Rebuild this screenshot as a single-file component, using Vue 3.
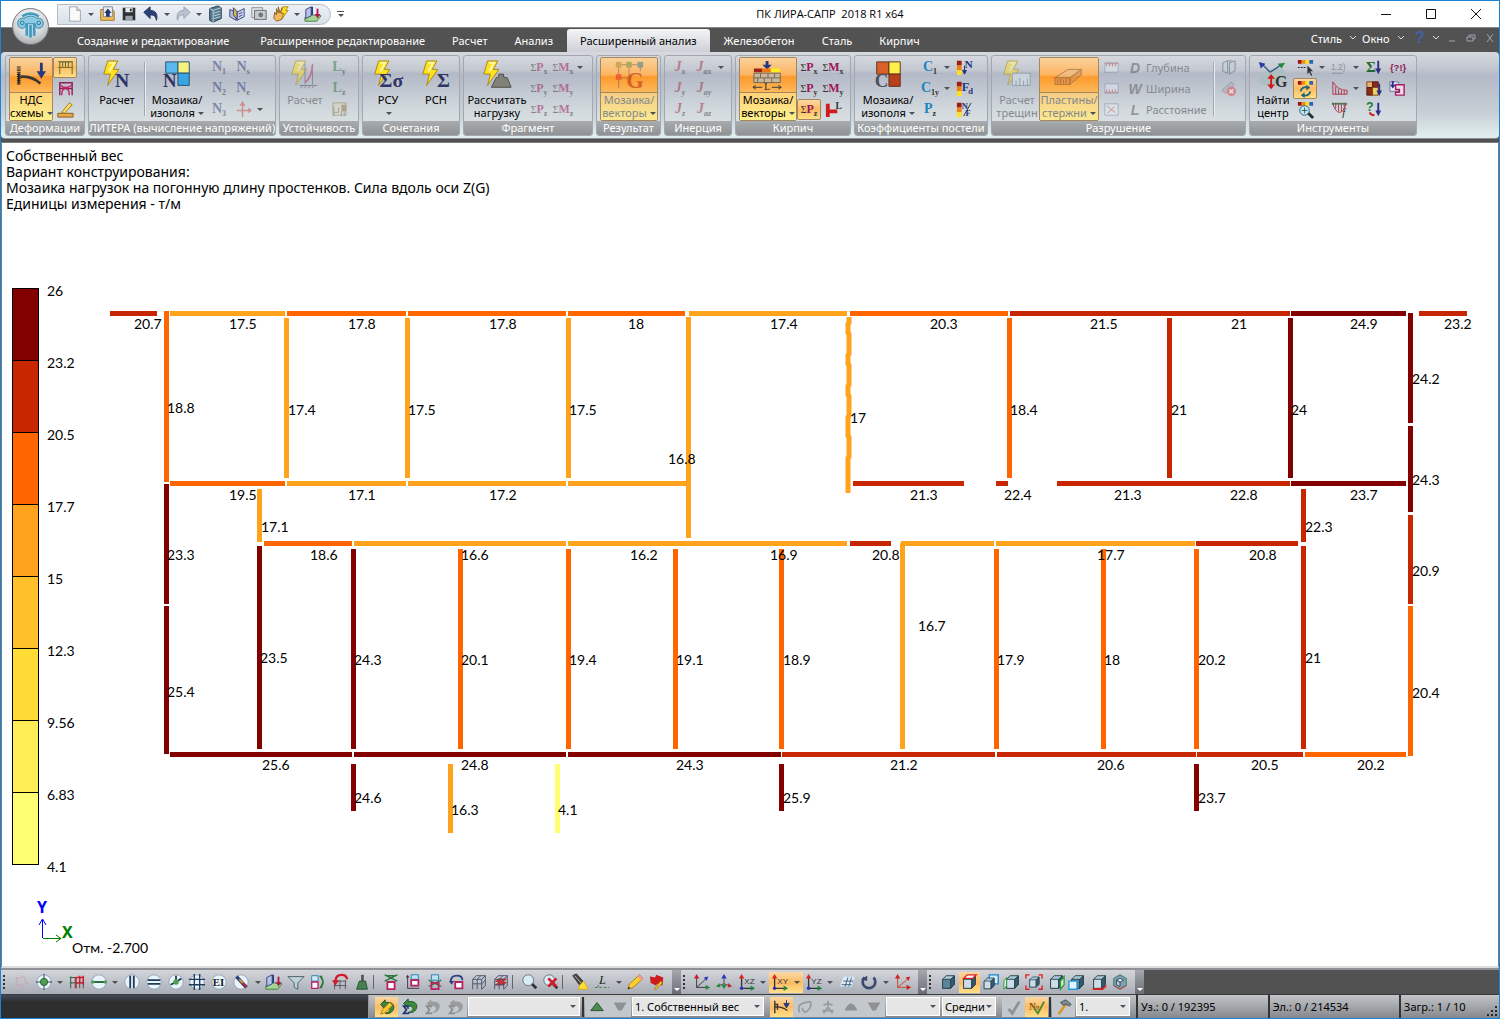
<script setup>
import { ref } from 'vue'

const bolt = '<path d="M7 1h11l-5 9h6L7 27l3-12H3z" fill="#ffe11f" stroke="#a8841a"/><path d="M9 3h5l-5 9" fill="none" stroke="#fff9b0" stroke-width="2"/>'
const cube = (front = '#5c8499') => `<path d="M4 7l4-4h9v10l-4 4H4z" fill="#a9c6d3" stroke="#25424f"/><path d="M4 7h9v10H4z" fill="${front}" stroke="#25424f"/><path d="M13 7l4-4v10l-4 4z" fill="#37596a" stroke="#25424f"/>`
const disc = '<circle cx="10" cy="10" r="8" fill="#e9f3fa" stroke="#8fa3b8"/>'
const axes = (t) => `<path d="M4 17V4M4 17h11" stroke="#333" stroke-width="1.5"/><path d="M4 1l-3 5h6z" fill="#d22"/><path d="M19 17l-5-3v6z" fill="#1a8a3a"/><circle cx="4" cy="17" r="2" fill="#2a36b8"/><text x="7" y="12" font-size="9" font-family="Liberation Sans, sans-serif" fill="#333">${t}</text>`
const rainbow = '<path d="M2 2h4v4H2z" fill="#a01212"/><path d="M6 2h4v4H6z" fill="#f08a10"/><path d="M10 2h4v4h-4z" fill="#ffe020"/><path d="M14 2h4v4h-4z" fill="#2a62c0"/>'
const bars = '<path d="M2 3h5v5H2z" fill="#9c1c10"/><path d="M2 8h5v5H2z" fill="#f08010"/><path d="M2 13h5v5H2z" fill="#ffe020"/>'
const serif = 'font-family="Liberation Serif, serif" font-weight="bold"'

const icons = {
  page: '<path d="M4 2h8l4 4v12H4z" fill="#fafafa" stroke="#9aa2ac"/><path d="M12 2v4h4" fill="#ddd" stroke="#9aa2ac"/>',
  open: '<path d="M3 5h13l2 2v10H3z" fill="#f0bd55" stroke="#9c7422"/><path d="M6 2h10v11H6z" fill="#e8edf5" stroke="#76849c"/><path d="M11 4l4 5h-2v4H9V9H7z" fill="#26336f"/>',
  save: '<path d="M3 3h14v14H3z" fill="#2e3236"/><path d="M6 3h8v5H6z" fill="#e7eaec"/><path d="M6 12h8v5H6z" fill="#9ca3a8"/><path d="M11 4h2v3h-2z" fill="#2e3236"/>',
  undo: '<path d="M2 8l7-6v4c6 0 9 4 7 11-1-5-3-6-7-6v4z" fill="#2b4378" stroke="#1f2e55"/>',
  redo: '<path d="M18 8l-7-6v4C5 6 2 10 4 17c1-5 3-6 7-6v4z" fill="#b9c3cf" stroke="#94a2b1"/>',
  book: '<path d="M4 4l9-3 4 2v12l-9 4-4-2z" fill="#55788c" stroke="#243c4a"/><path d="M8 6v13M4 4l4 2 9-3M9 9l7-2M9 12l7-2M9 15l7-2" stroke="#c5dbe6" fill="none"/>',
  openbook: '<path d="M2 5l7 3v9l-7-4z" fill="#b6c0e0" stroke="#2e3d78"/><path d="M18 4l-8 4v9l8-4z" fill="#cdd5ee" stroke="#2e3d78"/><path d="M6 3l4 4v9l-4-5z" fill="#dcb54a" stroke="#2e3d78"/><path d="M12 10l4-2M12 13l4-2" stroke="#333a9a"/>',
  camera: '<path d="M2 3h12v11H2z" fill="#e4e6e8" stroke="#888"/><path d="M5 6h13v10H5z" fill="#c2c7cb" stroke="#666"/><circle cx="12" cy="11" r="3.500" fill="#72797f" stroke="#eee"/>',
  hand: '<path d="M3 8l2 3V4l2 5V2l2 7 2-6v7l4-2-4 8-6 2-3-3z" fill="#f3b85e" stroke="#8f5a1e"/><path d="M12 2h6l-3 4h3l-7 9 2-6h-3z" fill="#ffe11f" stroke="#a8841a"/>',
  load3d: '<path d="M1 14l8-3 10 1-5 6H1z" fill="#a6d492" stroke="#3d7a34"/><path d="M2 5l6-3v10l-6 3z" fill="#b7c2e4" stroke="#2d3a80"/><path d="M9 2v9" stroke="#2d3a80" stroke-width="2"/><path d="M15 4v7" stroke="#b3164e" stroke-width="2"/><path d="M12 10h6l-3 5z" fill="#b3164e"/>',
  beam: '<path d="M4 7v20" stroke="#222" stroke-width="4" stroke-dasharray="1 1"/><path d="M4 14v11" stroke="#222" stroke-width="2"/><path d="M5 18q12-2 22 7" fill="none" stroke="#3b3735" stroke-width="3"/><path d="M28 3v10" stroke="#243a80" stroke-width="3"/><path d="M23 12h10l-5 8z" fill="#243a80"/>',
  calcN: `${bolt}<text x="15" y="29" ${serif} font-size="21" fill="#2e3566">N</text>`,
  mosaicN: `<path d="M5 2h13v12H5z" fill="#59b9ee" stroke="#24506c"/><path d="M18 2h12v12H18z" fill="#f5f27e" stroke="#24506c"/><path d="M18 14h12v13H18z" fill="#3aa4e2" stroke="#24506c"/><text x="2" y="29" ${serif} font-size="20" fill="#2e3566">N</text>`,
  buckling: `${bolt}<path d="M17 4v22M25 4v22" stroke="#555" stroke-width="1"/><path d="M25 5q-1 14-8 19" stroke="#c0306a" stroke-width="2" fill="none"/><path d="M11 27h19M12 30l3-3m1 3l3-3m1 3l3-3m1 3l3-3" stroke="#444"/>`,
  sigma: `${bolt}<text x="8" y="29" ${serif} font-size="21" fill="#2e3566">Σσ</text>`,
  sum: `${bolt}<text x="18" y="29" ${serif} font-size="21" fill="#2e3566">Σ</text>`,
  weight: `${bolt}<path d="M16 19l3-1v-3h5v3l4 1 4 10H11z" fill="#82827a" stroke="#4c4c46"/>`,
  resultG: `<path d="M3 5h27M6 5v25M17 5v22M29 5v7M3 19h15" stroke="#555" stroke-width="1"/><path d="M3 2h6v6H3z" fill="#9c8a20"/><path d="M14 2h6v6h-6z" fill="#6a8a30"/><path d="M26 2h6v6h-6z" fill="#2b7a86"/><path d="M3 15h6v6H3z" fill="#d22"/><text x="14" y="30" ${serif} font-size="24" fill="#b01a10">G</text>`,
  bricks: `<path d="M16 1v6" stroke="#243a80" stroke-width="3"/><path d="M11 5h10l-5 5z" fill="#243a80"/><path d="M2 9h9v4H2z" fill="#a02018"/><path d="M11 9h9v4h-9z" fill="#f07810"/><path d="M20 9h10v4H20z" fill="#ffee20"/><path d="M2 14h28v10H2z" fill="#cdb69c" stroke="#665"/><path d="M2 19h28M9 14v5M17 14v5M24 14v5M6 19v5M13 19v5M21 19v5" stroke="#665"/><path d="M1 29h10M21 29h10M4 27l-3 2 3 2M28 27l3 2-3 2" fill="none" stroke="#333"/><text x="13" y="32" font-family="Liberation Serif, serif" font-size="10" fill="#222">L</text>`,
  mosaicC: `<path d="M5 2h13v13H5z" fill="#d9602a" stroke="#5a3018"/><path d="M18 2h12v13H18z" fill="#fff04a" stroke="#5a3018"/><path d="M18 15h12v13H18z" fill="#b9401c" stroke="#5a3018"/><text x="3" y="29" ${serif} font-size="20" fill="#4b5158">C</text>`,
  crack: `${bolt}<path d="M12 14h19v13H12z" fill="#dfe8ee" stroke="#6d7f8c"/><path d="M16 27v-5m4 5v-8m4 8v-5m4 5v-7" stroke="#5d7690"/>`,
  slab: '<path d="M2 19l14-9h14l-12 9z" fill="#e6c098" stroke="#6a4a30"/><path d="M2 19h16v7H2zM18 19l12-9v6l-12 10z" fill="#c98a58" stroke="#6a4a30"/><path d="M5 25v-4m3 4v-5m3 5v-4m3 4v-5" stroke="#8a2a2a"/>',
  center: `<ellipse cx="16" cy="18" rx="15" ry="8" fill="#aebfc0" transform="rotate(-20 16 18)"/><path d="M14 13L5 4M14 13L26 5" stroke="#3a5a80" stroke-width="1.500"/><path d="M2 2l7 2-5 5z" fill="#2c3aa8"/><path d="M30 3l-8 1 4 5z" fill="#1f8a3c"/><path d="M15 18v9" stroke="#d01818" stroke-width="2"/><path d="M15 15l4 5h-8zM15 31l4-5h-8z" fill="#d01818"/><text x="19" y="29" ${serif} font-size="17" fill="#333">G</text>`,
  frame: '<path d="M4 17V4h13v13M3 10h15M7 4v6M13 4v6M10 4v6" fill="none" stroke="#4a6b2e"/><path d="M2 4h16M2 10h16" stroke="#8a7020"/>',
  framePink: '<path d="M4 17V4h13v13M4 10h13" fill="none" stroke="#8a2456" stroke-width="1.500"/><path d="M4 6q6 6 13 0M6 17q0-7 4-7t4 7" fill="none" stroke="#c8246a" stroke-width="1.500"/>',
  ruler: '<path d="M2 14h16v4H2z" fill="#e6a84a" stroke="#8d5f1b"/><path d="M6 13L14 3l3 2-8 9z" fill="#ffe066" stroke="#9d7a1c"/>',
  cross: '<path d="M9 3v15M3 11h14" stroke="#c44" stroke-width="1.500"/><path d="M9 1l3 5H6zM19 11l-4-3v6z" fill="#c44"/>',
  mu: '<path d="M3 3h14v13H3z" fill="#d8d2b6" stroke="#8b7c50"/><path d="M12 5h5v7h-5z" fill="#8d6e3a"/><path d="M4 7v10M4 13h5V8M12 12v5M15 12v5" stroke="#666" fill="none"/>',
  redL: `<path d="M4 4v14M4 12h10" stroke="#d01c1c" stroke-width="4"/><text x="12" y="9" ${serif} font-size="10" fill="#333">L</text>`,
  barN: `${bars}<path d="M10 8v7M8 13l2 4 2-4z" fill="#26357c" stroke="#26357c"/><text x="10" y="10" ${serif} font-size="12" fill="#26357c">N</text>`,
  barF: `${bars}<text x="7" y="13" ${serif} font-size="13" fill="#26357c">F</text><text x="14" y="16" ${serif} font-size="9" fill="#26357c">d</text>`,
  barNF: `${bars}<path d="M17 3L9 17" stroke="#333"/><text x="7" y="9" ${serif} font-size="9" fill="#26357c">N</text><text x="11" y="17" ${serif} font-size="9" fill="#26357c">F</text>`,
  gaugeTop: '<path d="M3 5h14v10H3z" fill="#e4e9ef" stroke="#7a8ba6"/><path d="M3 6h14M5 6v3m3-3v3m3-3v3m3-3v3" stroke="#b44"/>',
  gaugeBot: '<path d="M3 5h14v10H3z" fill="#e4e9ef" stroke="#7a8ba6"/><path d="M3 14h14M5 14v-3m3 3v-3m3 3v-3m3 3v-3" stroke="#b44"/>',
  gaugeX: '<path d="M3 4h14v12H3z" fill="#e4e9ef" stroke="#7a8ba6"/><path d="M5 6q5 5 9 7M13 7l-7 7" stroke="#b44" fill="none"/>',
  dups: '<path d="M4 5l5-2v13l-5-2zM11 5l6-2v10l-6 4z" fill="#c5ced8" stroke="#3f5870"/><path d="M9 3h5" stroke="#3f5870"/>',
  noErase: '<path d="M3 12L13 3l3 3-9 9z" fill="#aab" stroke="#777"/><circle cx="13" cy="13" r="5" fill="#e04848"/><path d="M11 11l4 4m0-4l-4 4" stroke="#fff" stroke-width="1.500"/>',
  palCursor: `${rainbow}<path d="M2 10h9" stroke="#222" stroke-dasharray="2 1"/><path d="M12 8v9l2-2 2 4 1-1-2-4h3z" fill="#333"/>`,
  palLoop: `${rainbow}<path d="M5 13a5 5 0 0 1 7-4M15 13a5 5 0 0 1-7 4" fill="none" stroke="#1f6670" stroke-width="2"/><path d="M11 6l4 3-4 3zM9 14l-4 3 4 3z" fill="#1f6670"/>`,
  palZoom: `${rainbow}<circle cx="9" cy="11" r="5" fill="#c8e4ee" stroke="#23627a"/><path d="M6 11h6M9 8v6" stroke="#23627a"/><path d="M13 14l5 5" stroke="#233" stroke-width="3"/>`,
  digits: '<text x="1" y="13" font-size="9" font-family="Liberation Sans, sans-serif" fill="#8a9098">1.2)</text><path d="M2 16h12" stroke="#8a9098"/>',
  curve: '<path d="M3 3v13h15v-4Q8 12 3 3M6 8v8m3-5v5m3-4v4m3-4v4" fill="none" stroke="#b0304e"/>',
  arch: '<path d="M3 4h14q-3 9-7 9T3 4M6 5v4m3-4v7m3-7v7m3-7v4" fill="none" stroke="#b0304e"/><path d="M2 4h16" stroke="#2c7a3c" stroke-width="2" stroke-dasharray="2 1"/><text x="13" y="17" font-family="Liberation Serif, serif" font-size="11" font-style="italic" fill="#222">f</text>',
  sumDown: `<text x="2" y="15" ${serif} font-size="16" fill="#1f6b2c">Σ</text><path d="M15 3v9" stroke="#2a2f86" stroke-width="2"/><path d="M12 11h6l-3 6z" fill="#2a2f86"/>`,
  blocks: '<path d="M3 3h6v6H3z" fill="#e8b070" stroke="#7a4a20"/><path d="M9 3h6v6H9zM3 9h6v8H3z" fill="#8a2a18" stroke="#5a1a10"/><path d="M9 9h6v8H9z" fill="#f0d060" stroke="#7a4a20"/><path d="M16 5v8" stroke="#2a2f86" stroke-width="2"/><path d="M13 12h6l-3 6z" fill="#2a2f86"/>',
  askDown: '<text x="2" y="12" font-family="Liberation Sans, sans-serif" font-weight="bold" font-size="13" fill="#1f7a34">?</text><path d="M6 13q1 3 5 3" fill="none" stroke="#c22" stroke-width="2"/><path d="M15 3v9" stroke="#2a2f86" stroke-width="2"/><path d="M12 11h6l-3 6z" fill="#2a2f86"/>',
  ask: '<text x="2" y="14" font-family="Liberation Sans, sans-serif" font-weight="bold" font-size="10" fill="#8c1d58">{?!}</text>',
  copy: '<path d="M2 3h9v10H2z" fill="#e6e9f3" stroke="#6a76a4"/><path d="M8 8V6h9v11H8v-3h4v-3H8z" fill="#f4dbe8" stroke="#a02060" stroke-width="1.500"/><path d="M5 2v5" stroke="#2a2f86" stroke-width="2"/><path d="M2 6h6l-3 4z" fill="#2a2f86"/>',
  star: '<path d="M3 5l5 1 4-3 1 5 4 3-5 1-2 5-3-4-4 1 2-4z" fill="none" stroke="#c9a3aa"/>',
  node: `${disc}<path d="M10 1v18M1 10h18" stroke="#235" /><circle cx="10" cy="10" r="4" fill="#4ca052" stroke="#1e5a26"/>`,
  gridRed: '<path d="M3 5h15M3 11h15M3 5v12M8 5v12M13 5v12M17 5v12" stroke="#444" fill="none"/><path d="M9 5h8M9 11h8M9 5v12M13 3v8M17 3v10" fill="none" stroke="#d01c2c" stroke-width="1.500"/><path d="M2 4h2v2H2zM2 10h2v2H2z" fill="#2c8a3c"/>',
  barH: `${disc}<path d="M3 10h14" stroke="#1f5a2c" stroke-width="2"/><circle cx="3" cy="10" r="2" fill="#4ca052"/><circle cx="17" cy="10" r="2" fill="#4ca052"/>`,
  barV: `${disc}<path d="M8 3v14M12 3v14" stroke="#1f3b5c" stroke-width="2"/>`,
  barEq: `${disc}<path d="M3 8h14M3 12h14" stroke="#1f3b5c" stroke-width="2"/>`,
  tri: `${disc}<path d="M10 10V3M10 10l-6 3M10 10l6-4" stroke="#235" stroke-width="2"/><circle cx="10" cy="10" r="3" fill="#4ca052"/>`,
  hash: `${disc}<path d="M7 1v18M13 1v18M1 7h18M1 13h18" stroke="#1f3b5c" stroke-width="1.500"/>`,
  ei: `${disc}<text x="3" y="14" ${serif} font-size="12" fill="#222">EI</text>`,
  noPen: `${disc}<path d="M5 4l11 12" stroke="#2a3f7c" stroke-width="4"/><path d="M8 7l5 5" stroke="#e0a030" stroke-width="2"/><path d="M12 11l4 5" stroke="#c22" stroke-width="2"/>`,
  funnel: '<path d="M1 4h18l-7 7v7l-4-2v-5z" fill="#c3d2d8" stroke="#3e5b62"/>',
  swap: '<path d="M3 3h7v6H3z" fill="#d4ebf8" stroke="#247ab0"/><path d="M3 10h7v7H3z" fill="#fff" stroke="#c02068" stroke-width="1.500"/><path d="M13 4q5 6 0 12" stroke="#2f7a3a" stroke-width="2" fill="none"/><path d="M11 3l4 0-1 4zM11 17l4 0-1-4z" fill="#2f7a3a"/>',
  frameUndo: '<path d="M3 9h14M3 14h14M4 8v10M10 8v10M16 8v10" stroke="#555"/><path d="M5 9q0-7 7-7 5 0 6 5" fill="none" stroke="#d01c2c" stroke-width="2.500"/><path d="M1 8h8l-4 6z" fill="#d01c2c"/>',
  brush: '<path d="M9 2h3v7H9z" fill="#555"/><path d="M7 9h7l2 9H4z" fill="#468052" stroke="#23502c"/>',
  cutTop: '<path d="M3 2l14 7M17 2L3 9M5 3h10" stroke="#267a38" stroke-width="1.500"/><path d="M6 10h8v8H6z" fill="#fff" stroke="#b82060" stroke-width="2"/>',
  cutSide: '<path d="M4 4v13h13" fill="none" stroke="#333"/><path d="M8 2h8v5H8z" fill="#bfe1f4" stroke="#247ab0"/><path d="M8 8h8v6H8z" fill="#fff" stroke="#b82060" stroke-width="2"/><path d="M2 5l2-3 2 3z" fill="#333"/>',
  cutMid: '<path d="M6 2h8v6H6z" fill="#bfe1f4" stroke="#247ab0"/><path d="M3 8l14 7M17 8L3 15" stroke="#267a38" stroke-width="1.500"/><path d="M6 11h8v7H6z" fill="none" stroke="#b82060" stroke-width="2"/>',
  rotateBox: '<path d="M3 10q0-7 7-7 6 0 6 5" fill="none" stroke="#2f3f80" stroke-width="2"/><path d="M1 9h6l-3 4z" fill="#2f3f80"/><path d="M8 10h8v7H8z" fill="#fff" stroke="#b82060" stroke-width="2"/>',
  frame3d: '<path d="M3 7h10v11M3 7v11M8 7v11M3 12h10M3 7l4-4h10v11l-4 4M13 7l4-4M8 7l4-4M13 12l4-4" fill="none" stroke="#444e6c"/>',
  frame3dRed: '<path d="M3 10h10l4-4H7zM3 14h10l4-4H7z" fill="#d83030"/><path d="M3 7h10v11M3 7v11M8 7v11M3 13h10M3 7l4-4h10v11l-4 4M13 7l4-4M8 7l4-4" fill="none" stroke="#444e6c"/>',
  zoom: '<path d="M12 12l5 5" stroke="#333" stroke-width="3"/><circle cx="8" cy="8" r="6" fill="#d9edf6" stroke="#5b6e7a"/>',
  zoomX: '<path d="M12 12l5 5" stroke="#333" stroke-width="3"/><circle cx="8" cy="8" r="6" fill="#d9edf6" stroke="#5b6e7a"/><path d="M7 6l9 9M16 6l-9 9" stroke="#d01c2c" stroke-width="3"/>',
  torch: '<path d="M2 3l4-2 8 9-4 4z" fill="#4d4a44" stroke="#222"/><path d="M4 3l7 8" stroke="#b8b4a8"/><path d="M14 9l5 9h-11l2-5z" fill="#ffe030" stroke="#d8a818"/>',
  localAxis: '<path d="M2 16h16M5 16l5-9" stroke="#3a7a44" stroke-dasharray="3 2"/><text x="7" y="12" font-family="Liberation Serif, serif" font-style="italic" font-size="13" fill="#222">L</text>',
  pencil: '<path d="M2 18l2-6L15 2l4 4-11 10z" fill="#ffcf2e" stroke="#a87818"/><path d="M15 2l4 4-2 2-4-4z" fill="#ef9aa0"/><path d="M2 18l1-3 2 2z" fill="#333"/>',
  flag: '<path d="M2 4l6 1 1-3 8 3-1 9-6-2-1 2-6-3z" fill="#cf1c1c"/><path d="M7 18l7-9 2 2-7 7z" fill="#ffcf2e" stroke="#a87818"/>',
  axis3: '<path d="M4 4v12h12M4 16L15 6" stroke="#333" fill="none"/><path d="M4 1l3 5H1z" fill="#d01c2c"/><path d="M19 16l-5-3v6z" fill="#268a3c"/><path d="M17 4l-5 1 3 4z" fill="#2a36b8"/>',
  axisIso: '<path d="M10 3v9M10 12l-6 2M10 12l6 2" stroke="#444"/><path d="M10 1l3 5H7z" fill="#2a36b8"/><path d="M1 15l4-4 1 5z" fill="#268a3c"/><path d="M19 15l-4-4-1 5z" fill="#d01c2c"/><path d="M10 18l-3-5h6z" fill="#268a3c"/>',
  xz: axes('XZ'), xy: axes('XY'), yz: axes('YZ'),
  plane: '<path d="M2 15L6 4h13l-4 11z" fill="#e0ebf4" stroke="#c1d2e0"/><path d="M4 13h11M6 9h11M8 15l3-10M12 15l3-10" stroke="#38587a"/>',
  spin: '<path d="M5 5a7 7 0 1 0 10 0" fill="none" stroke="#3c4a70" stroke-width="3"/><path d="M1 7l7-4v6z" fill="#3c4a70"/>',
  axisRed: '<path d="M4 4v12h12M4 16L15 7" stroke="#c42" fill="none"/><path d="M4 1l3 5H1zM19 16l-5-3v6zM18 4l-5 1 3 4z" fill="#d02020"/>',
  cube: cube(), cubeTop: cube('#cddde6') + '<path d="M4 6l4-4h10l-4 4z" fill="#fff" stroke="#e02020" stroke-width="1.500"/>',
  cubeBack: '<path d="M8 2h10v10H8z" fill="#d5ecfa" stroke="#1f82c8" stroke-width="1.500"/>' + `<g transform="translate(-1 3) scale(.85)">${cube('#cddde6')}</g>`,
  cubeLeft: cube('#cddde6') + '<path d="M1 9l3-4v9l-3 4z" fill="#d8f4d8" stroke="#2a9a3c"/>',
  cubeFit: `<g transform="translate(2 2) scale(.8)">${cube('#cddde6')}</g><path d="M1 6V2h4M15 2h4v4M19 14v4h-4M5 18H1v-4" fill="none" stroke="#e02020" stroke-width="1.500"/>`,
  cubeRight: cube('#cddde6') + '<path d="M15 9l4-5v9l-4 5z" fill="#d8f4d8" stroke="#2a9a3c" stroke-width="1.500"/>',
  cubeFront: cube() + '<path d="M1 9h9v9H1z" fill="#e5f4fc" stroke="#1f9be0" stroke-width="1.500"/>',
  cubeBottom: cube('#cddde6') + '<path d="M3 18h11l4-4" fill="none" stroke="#e02020" stroke-width="2"/>',
  cubeIso: '<path d="M10 2l7 4v8l-7 4-7-4V6z" fill="#7fa1b2" stroke="#2a7a50"/><path d="M6 8l4-2 4 2-4 2z" fill="#eef6fa" stroke="#345"/><path d="M6 8v5l4 2v-5z" fill="#b5cdd8" stroke="#345"/><path d="M3 14l7 4 7-4" stroke="#c33" fill="none"/>',
  loopPen: '<path d="M3 7l5-5v3c8-1 11 3 9 8-2 4-6 5-9 4 4-1 6-3 5-5s-2-2-5-2v3z" fill="#3d8a3e" stroke="#1d4f22"/><path d="M3 18l2-5 8-8 3 3-8 8z" fill="#ffcf2e" stroke="#a87818"/>',
  loopSum: '<path d="M3 6l5-5v3c8-1 11 3 9 8-2 4-6 5-9 4 4-1 6-3 5-5s-2-2-5-2v3z" fill="#3d8a3e" stroke="#1d4f22"/><path d="M9 9H3l3 4-3 4h6" fill="none" stroke="#26357c" stroke-width="2"/>',
  loopGrey: '<path d="M3 6l5-5v3c8-1 11 3 9 8-2 4-6 5-9 4 4-1 6-3 5-5s-2-2-5-2v3z" fill="#9a9c9e"/><path d="M9 9H3l3 4-3 4h6" fill="none" stroke="#8b8d90" stroke-width="2"/>',
  up: '<path d="M10 5l7 9H3z" fill="#4b8a52" stroke="#2a4a30"/>',
  down: '<path d="M3 5h14l-5 9H8z" fill="#8f9193"/>',
  upGrey: '<path d="M3 14q3-8 7-8t7 8z" fill="#8f9193"/>',
  deform: '<path d="M2 3v14M2 10q8-1 14 4M2 7h3v6" stroke="#333" stroke-width="1.500" fill="none"/><path d="M15 2v5M12 6l3 5 3-5z" stroke="#26357c" fill="#26357c"/>',
  loop: '<path d="M4 16q-3-8 3-10t9-2q2 6-3 10T7 11" fill="none" stroke="#9a9c9e" stroke-width="2"/>',
  man: '<path d="M10 3v6M5 8l5-2 5 2M5 17l5-7 5 7M4 14h12" stroke="#9a9c9e" stroke-width="2" fill="none"/>',
  check: '<path d="M4 12l4 5 8-13" fill="none" stroke="#8f9193" stroke-width="3"/>',
  noCheck: `<text x="1" y="13" ${serif} font-size="12" fill="#8a5a18">№</text><path d="M7 12l4 5 7-13" fill="none" stroke="#4c8a2a" stroke-width="2"/>`,
  hammer: '<path d="M4 18L12 7" stroke="#d99a2b" stroke-width="3"/><path d="M6 5l6-3 6 5-2 2-4-2-3 1z" fill="#7c8a92" stroke="#454f55"/>'
}

const title = 'ПК ЛИРА-САПР  2018 R1 x64'
const windowTabs = ['Создание и редактирование', 'Расширенное редактирование', 'Расчет', 'Анализ', 'Расширенный анализ', 'Железобетон', 'Сталь', 'Кирпич']
const activeTab = ref('Расширенный анализ')

const quick = [
  { i: 'page', dd: 1 }, { i: 'open' }, { i: 'save' }, { i: 'undo', dd: 1 }, { i: 'redo', dd: 1 },
  { i: 'book' }, { i: 'openbook' }, { i: 'camera' }, { i: 'hand', dd: 1 }, { i: 'load3d' }
]

const N = (s) => ({ g: 'N', s, c: 'navy', off: 1 })
const P = (s, off, on) => ({ g: 'P', s, pre: 'Σ', c: 'wine', off, on })
const M = (s, off) => ({ g: 'M', s, pre: 'Σ', c: 'wine', off })
const J = (s) => ({ g: 'J', s, c: 'rust', off: 1 })
const I = (i, on, off) => ({ i, on, off })
const arrow = { dd: 1 }

const groups = [
  { title: 'Деформации', k: 'w80', parts: [
    { big: 'НДС\nсхемы', i: 'beam', on: 1, dd: 1, k: 'b44' },
    { col: [I('frame', 1), I('framePink'), I('ruler')] }] },
  { title: 'ЛИТЕРА (вычисление напряжений)', k: 'w188', parts: [
    { big: 'Расчет', i: 'calcN', k: 'b50' }, { sep: 1 },
    { big: 'Мозаика/\nизополя', i: 'mosaicN', dd: 1, k: 'b60' },
    { col: [N('1'), N('2'), N('3')] }, { col: [N('s'), N('e'), I('cross', 0, 1)] }, { col: [null, null, arrow], slim: 1 }] },
  { title: 'Устойчивость', k: 'w80', parts: [
    { big: 'Расчет', i: 'buckling', off: 1, k: 'b44' },
    { col: [{ g: 'L', s: 'y', c: 'green', off: 1 }, { g: 'L', s: 'z', c: 'green', off: 1 }, I('mu', 0, 1)] }] },
  { title: 'Сочетания', k: 'w98', parts: [
    { big: 'РСУ\n', i: 'sigma', dd: 1, k: 'b44' }, { sep: 1 }, { big: 'РСН', i: 'sum', k: 'b44' }] },
  { title: 'Фрагмент', k: 'w130', parts: [
    { big: 'Рассчитать\nнагрузку', i: 'weight', k: 'b60' },
    { col: [P('x', 1), P('y', 1), P('z', 1)] }, { col: [M('x', 1), M('y', 1), M('z', 1)] }, { col: [arrow, null, null], slim: 1 }] },
  { title: 'Результат', k: 'w65', parts: [{ big: 'Мозаика/\nвекторы', i: 'resultG', dd: 1, on: 1, off: 1, k: 'b58' }] },
  { title: 'Инерция', k: 'w68', parts: [
    { col: [J('x'), J('y'), J('z')] }, { col: [J('ax'), J('ay'), J('az')] }, { col: [arrow, null, null], slim: 1 }] },
  { title: 'Кирпич', k: 'w116', parts: [
    { big: 'Мозаика/\nвекторы', i: 'bricks', dd: 1, on: 1, k: 'b58' },
    { col: [P('x'), P('y'), P('z', 0, 1)] }, { col: [M('x'), M('y'), I('redL')] }] },
  { title: 'Коэффициенты постели', k: 'w134', parts: [
    { big: 'Мозаика/\nизополя', i: 'mosaicC', dd: 1, k: 'b60' },
    { col: [{ g: 'C', s: '1', c: 'blue' }, { g: 'C', s: '1y', c: 'blue' }, { g: 'P', s: 'z', c: 'blue' }] },
    { col: [arrow, arrow, null], slim: 1 },
    { col: [I('barN'), I('barF'), I('barNF')] }] },
  { title: 'Разрушение', k: 'w255', parts: [
    { big: 'Расчет\nтрещин', i: 'crack', off: 1, k: 'b44' },
    { big: 'Пластины/\nстержни', i: 'slab', dd: 1, on: 1, off: 1, k: 'b60' },
    { col: [I('gaugeTop', 0, 1), I('gaugeBot', 0, 1), I('gaugeX', 0, 1)] },
    { col: [{ g: 'D', t: 'Глубина', c: 'dim', off: 1 }, { g: 'W', t: 'Ширина', c: 'dim', off: 1 }, { g: 'L', t: 'Расстояние', c: 'dim', off: 1 }], wide: 1 },
    { sep: 1 }, { col: [I('dups', 0, 1), I('noErase', 0, 1), null] }] },
  { title: 'Инструменты', k: 'w168', parts: [
    { big: 'Найти\nцентр', i: 'center', k: 'b40' },
    { col: [I('palCursor'), I('palLoop', 1), I('palZoom')] }, { col: [arrow, null, null], slim: 1 },
    { col: [I('digits'), I('curve'), I('arch')] }, { col: [arrow, arrow, null], slim: 1 },
    { col: [I('sumDown'), I('blocks'), I('askDown')] }, { col: [I('ask'), I('copy'), null] }] }
]

const legend = [
  ['26', '#820000'], ['23.2', '#c82600'], ['20.5', '#ff6600'], ['17.7', '#ffa31c'],
  ['15', '#ffc02a'], ['12.3', '#ffdb36'], ['9.56', '#ffed55'], ['6.83', '#ffff73']
]

const D = '#820000', R = '#c82600', O = '#ff6600', A = '#ffa31c', Y = '#ffff73'
const horizontal = [
  [110, 157, 313, R], [170, 285, 313, A], [287, 406, 313, O], [408, 566, 313, O], [568, 685, 313, O], [689, 847, 313, A],
  [850, 1008, 313, O], [1010, 1290, 313, R], [1291, 1406, 313, D], [1419, 1467, 313, R],
  [170, 285, 483, O], [287, 406, 483, A], [408, 566, 483, A], [568, 687, 483, A], [853, 964, 483, R], [996, 1008, 483, R],
  [1057, 1290, 483, R], [1291, 1406, 483, D],
  [264, 352, 543, O], [354, 566, 543, A], [568, 847, 543, A], [850, 891, 543, R], [901, 994, 543, A], [996, 1195, 543, A], [1196, 1298, 543, R],
  [170, 352, 754, D], [354, 566, 754, D], [568, 781, 754, D], [782, 995, 754, R], [997, 1196, 754, R], [1197, 1303, 754, R], [1305, 1406, 754, O]
]
const vertical = [
  [166, 311, 482, O], [166, 484, 604, D], [166, 606, 754, D],
  [286, 318, 478, A], [407, 318, 478, A], [568, 318, 478, A], [688, 317, 538, A], [1009, 318, 478, O], [1169, 318, 478, R], [1290, 318, 478, D],
  [1410, 313, 423, D], [1410, 426, 512, D], [1410, 515, 604, R], [1410, 606, 756, O],
  [259, 489, 542, A], [259, 546, 749, D], [353, 549, 749, D], [460, 549, 749, O], [568, 549, 749, O], [675, 549, 749, O], [781, 549, 749, O],
  [902, 543, 749, A], [996, 549, 749, O], [1103, 549, 749, O], [1196, 549, 749, O], [1303, 489, 542, R], [1303, 546, 749, R],
  [353, 764, 811, D], [450, 764, 833, A], [557, 764, 833, Y], [781, 764, 811, D], [1196, 764, 811, D]
]
const labels = [
  ['20.7', 134, 324], ['17.5', 229, 324], ['17.8', 348, 324], ['17.8', 489, 324], ['18', 628, 324], ['17.4', 770, 324], ['20.3', 930, 324],
  ['21.5', 1090, 324], ['21', 1231, 324], ['24.9', 1350, 324], ['23.2', 1444, 324],
  ['18.8', 167, 408], ['17.4', 288, 410], ['17.5', 408, 410], ['17.5', 569, 410], ['17', 850, 418], ['18.4', 1010, 410], ['21', 1171, 410], ['24', 1291, 410],
  ['24.2', 1412, 379], ['24.3', 1412, 480], ['20.9', 1412, 571], ['20.4', 1412, 693], ['16.8', 668, 459],
  ['19.5', 229, 495], ['17.1', 348, 495], ['17.2', 489, 495], ['21.3', 910, 495], ['22.4', 1004, 495], ['21.3', 1114, 495], ['22.8', 1230, 495], ['23.7', 1350, 495],
  ['17.1', 261, 527], ['22.3', 1305, 527], ['23.3', 167, 555], ['18.6', 310, 555], ['16.6', 461, 555], ['16.2', 630, 555], ['16.9', 770, 555], ['20.8', 872, 555],
  ['17.7', 1097, 555], ['20.8', 1249, 555], ['16.7', 918, 626], ['25.4', 167, 692], ['23.5', 260, 658], ['24.3', 354, 660], ['20.1', 461, 660], ['19.4', 569, 660],
  ['19.1', 676, 660], ['18.9', 783, 660], ['17.9', 997, 660], ['18', 1104, 660], ['20.2', 1198, 660], ['21', 1305, 658],
  ['25.6', 262, 765], ['24.8', 461, 765], ['24.3', 676, 765], ['21.2', 890, 765], ['20.6', 1097, 765], ['20.5', 1251, 765], ['20.2', 1357, 765],
  ['24.6', 354, 798], ['16.3', 451, 810], ['4.1', 558, 810], ['25.9', 783, 798], ['23.7', 1198, 798]
]

const bar1 = [
  I('star'), I('node'), arrow, I('gridRed'), I('barH'), arrow, I('barV'), I('barEq'), I('tri'), I('hash'), I('ei'), I('noPen'), arrow,
  I('load3d'), I('funnel'), I('swap'), I('frameUndo'), I('brush'), { sep: 1 }, I('cutTop'), I('cutSide'), I('cutMid'), I('rotateBox'),
  I('frame3d'), I('frame3dRed'), { sep: 1 }, I('zoom'), I('zoomX'), { sep: 1 }, I('torch'), I('localAxis'), arrow, I('pencil'), I('flag')
]
const bar2 = [I('axis3'), I('axisIso'), I('xz'), arrow, I('xy', 1), { dd: 1, on: 1 }, I('yz'), arrow, I('plane'), I('spin'), arrow, I('axisRed')]
const bar3 = [I('cube'), I('cubeTop', 1), I('cubeBack'), I('cubeLeft'), I('cubeFit'), I('cubeRight'), I('cubeFront'), I('cubeBottom'), I('cubeIso')]
const toolbars = [{ k: 't1', items: bar1 }, { k: 't2', items: bar2 }, { k: 't3', items: bar3 }]

const status = [
  { b: [I('loopPen', 1), I('loopSum'), I('loopGrey'), I('loopGrey')] },
  { s: '', k: 's112', name: 'История' }, { sep: 1 },
  { b: [I('up'), I('down')] }, { s: '1. Собственный вес', k: 's132', name: 'Загружение' }, { gap: 1 },
  { b: [I('deform', 1), I('loop'), I('man'), I('upGrey'), I('down')] },
  { s: '', k: 's54', name: 'Форма' }, { s: 'Средни', k: 's54', name: 'Слой' }, { gap: 1 },
  { b: [I('check'), I('noCheck', 1)] }, { sep: 1 }, { b: [I('hammer')] },
  { s: '1.', k: 's54', name: 'Вариант' }
]
const counters = ['Уз.: 0 / 192395', 'Эл.: 0 / 214534', 'Загр.: 1 / 10']
</script>

<template>
  <div class="window">
    <button class="orb" aria-label="Меню приложения">
      <svg viewBox="0 0 36 36">
        <path d="M4 14q1-6 7-5 7-5 14 0 6-1 7 5 0 6-6 6-3-1-3-5H13q0 4-3 5-6 0-6-6z" fill="#8ccbe2" stroke="#2f7fa3" />
        <path d="M14 15v13M18 16v14M22 15v13M9 7q9-6 18 0" stroke="#3f9cc0" stroke-width="3" fill="none" />
        <circle cx="9" cy="14" r="2" fill="none" stroke="#2a7090" /><circle cx="27" cy="14" r="2" fill="none" stroke="#2a7090" />
      </svg>
    </button>

    <header class="titlebar">
      <div class="quick">
        <template v-for="q in quick" :key="q.i">
          <button class="qbtn" :aria-label="q.i"><svg viewBox="0 0 20 20" v-html="icons[q.i]" /></button>
          <button v-if="q.dd" class="drop" aria-label="Список"><i class="tri" /></button>
        </template>
      </div>
      <button class="drop more" aria-label="Настройка"><i class="tri" /></button>
      <h1>{{ title }}</h1>
      <div class="syskeys">
        <button aria-label="Свернуть"><svg viewBox="0 0 12 12"><path d="M1 6.500h10" /></svg></button>
        <button aria-label="Развернуть"><svg viewBox="0 0 12 12"><path d="M1.500 1.500h9v9h-9z" /></svg></button>
        <button aria-label="Закрыть"><svg viewBox="0 0 12 12"><path d="M1 1l10 10M11 1L1 11" /></svg></button>
      </div>
    </header>

    <nav class="tabs">
      <button v-for="t in windowTabs" :key="t" :class="['tab', { active: t === activeTab }]" @click="activeTab = t">{{ t }}</button>
      <div class="tabtools">
        <button>Стиль <svg class="chev" viewBox="0 0 8 8"><path d="M1 2l3 3 3-3" /></svg></button>
        <button>Окно <svg class="chev" viewBox="0 0 8 8"><path d="M1 2l3 3 3-3" /></svg></button>
        <button><span class="help">?</span> <svg class="chev" viewBox="0 0 8 8"><path d="M1 2l3 3 3-3" /></svg></button>
        <button class="mdi" aria-label="Свернуть окно"><svg viewBox="0 0 10 10"><path d="M2 8h6" /></svg></button>
        <button class="mdi" aria-label="Восстановить окно"><svg viewBox="0 0 10 10"><path d="M1 4h6v4H1zM3 4V2h6v4H7" /></svg></button>
        <button class="mdi" aria-label="Закрыть окно"><svg viewBox="0 0 10 10"><path d="M2 1l6 8M8 1L2 9" /></svg></button>
      </div>
    </nav>

    <section class="ribbon">
      <div v-for="g in groups" :key="g.title" :class="['group', g.k]">
        <div class="body">
          <template v-for="(p, n) in g.parts" :key="n">
            <button v-if="p.big" :class="['big', p.k, { on: p.on, off: p.off }]">
              <span class="pic"><svg viewBox="0 0 34 34" v-html="icons[p.i]" /></span>
              <span class="cap">{{ p.big }}<i v-if="p.dd" class="tri" /></span>
            </button>
            <span v-else-if="p.sep" class="vsep" />
            <div v-else :class="['col', { slim: p.slim, wide: p.wide }]">
              <template v-for="(c, m) in p.col" :key="m">
                <span v-if="!c" class="cell" />
                <button v-else-if="c.dd" class="cell" aria-label="Список"><i class="tri" /></button>
                <button v-else-if="c.i" :class="['cell', { on: c.on, off: c.off }]" :aria-label="c.i"><svg viewBox="0 0 20 20" v-html="icons[c.i]" /></button>
                <button v-else :class="['cell', c.c, { on: c.on, off: c.off }]">
                  <span class="glyph"><span v-if="c.pre" class="pre">{{ c.pre }}</span>{{ c.g }}<sub v-if="c.s">{{ c.s }}</sub></span>
                  <span v-if="c.t" class="words">{{ c.t }}</span>
                </button>
              </template>
            </div>
          </template>
        </div>
        <h2>{{ g.title }}</h2>
      </div>
    </section>

    <main class="canvas">
      <div class="notes">
        <p>Собственный вес</p>
        <p>Вариант конструирования:</p>
        <p>Мозаика нагрузок на погонную длину простенков. Сила вдоль оси Z(G)</p>
        <p>Единицы измерения - т/м</p>
      </div>
      <div class="model">
        <ul class="legend">
          <li v-for="[v, c] in legend" :key="v"><span class="swatch" :style="{ background: c }" /><span class="val">{{ v }}</span></li>
          <li class="last"><span class="val">4.1</span></li>
        </ul>
        <svg class="plan" viewBox="100 288 1398 592">
          <rect v-for="(w, n) in horizontal" :key="'h' + n" :x="w[0]" :y="w[2] - 2" :width="w[1] - w[0]" height="5" :fill="w[3]" />
          <rect v-for="(w, n) in vertical" :key="'v' + n" :x="w[0] - 2" :y="w[1]" width="5" :height="w[2] - w[1]" :fill="w[3]" />
          <path d="M849 317v6l-1 1v9l1 1v20l-1 1v9l1 1v20l-1 1v9l1 1v20l-1 1v19l1 1v20l-1 1v35" fill="none" :stroke="A" stroke-width="5" />
          <text v-for="(l, n) in labels" :key="'t' + n" :x="l[1]" :y="l[2] + 5">{{ l[0] }}</text>
        </svg>
      </div>
      <div class="origin">
        <svg viewBox="0 0 40 56">
          <text x="5" y="14" fill="#0000ff">Y</text>
          <text x="30" y="39" fill="#008000">X</text>
          <path d="M10.500 39V21M7 26l3.500-6 3.500 6" fill="none" stroke="#0000ff" />
          <path d="M11 39.500h18M24 36l5 3.500-5 3.500" fill="none" stroke="#008000" />
        </svg>
        <span>Отм. -2.700</span>
      </div>
    </main>

    <section class="tools">
      <div v-for="b in toolbars" :key="b.k" :class="['strip', b.k]">
        <span class="grip" />
        <template v-for="(c, n) in b.items" :key="n">
          <span v-if="c.sep" class="tsep" />
          <button v-else-if="c.dd" :class="['tdrop', { on: c.on }]" aria-label="Список"><i class="tri" /></button>
          <button v-else :class="['tbtn', { on: c.on }]" :aria-label="c.i"><svg viewBox="0 0 20 20" v-html="icons[c.i]" /></button>
        </template>
        <button class="overflow" aria-label="Ещё"><i class="tri" /></button>
      </div>
    </section>

    <footer class="status">
      <div class="controls">
        <template v-for="(s, n) in status" :key="n">
          <div v-if="s.b" class="btns">
            <button v-for="(c, m) in s.b" :key="m" :class="['sbtn', { on: c.on }]" :aria-label="c.i"><svg viewBox="0 0 20 20" v-html="icons[c.i]" /></button>
          </div>
          <label v-else-if="s.k" :class="['pick', s.k]"><select :aria-label="s.name"><option>{{ s.s }}</option></select><i class="tri" /></label>
          <span v-else-if="s.sep" class="ssep" />
          <span v-else class="sgap" />
        </template>
      </div>
      <span v-for="c in counters" :key="c" class="counter">{{ c }}</span>
      <svg class="resize" viewBox="0 0 12 12"><path d="M8 0h2v2H8zM4 4h2v2H4zM8 4h2v2H8zM0 8h2v2H0zM4 8h2v2H4zM8 8h2v2H8z" fill="#26282a" /></svg>
    </footer>
  </div>
</template>

<style>
html, body { margin: 0; background: #fff; }
</style>

<style scoped>
* { box-sizing: border-box; }
.window {
  position: relative; display: flex; flex-direction: column; min-height: 100vh;
  border: 1px solid #1883d7; background: #525252; color: #000;
  font: 11px/13px "Noto Sans", "Open Sans", sans-serif;
}
button { border: 0; padding: 0; margin: 0; background: none; color: inherit; font: inherit; }
svg { display: block; overflow: visible; }
.tri { display: inline-block; border: 3px solid transparent; border-top-color: #4c5158; border-bottom: 0; }

.orb { position: absolute; left: 11px; top: 7px; width: 37px; height: 37px; border-radius: 50%; border: 1px solid #777; background: radial-gradient(circle at 50% 30%, #fff, #d2d5d8 55%, #909498); z-index: 2; }
.orb svg { width: 33px; height: 33px; margin: 1px; }

.titlebar { display: flex; align-items: center; height: 26px; padding-left: 56px; background: #fff; }
.quick { display: flex; align-items: center; height: 21px; padding: 0 6px; border: 1px solid #b4bcc8; border-radius: 0 11px 11px 0; background: linear-gradient(#edf1f6, #d9e0e9); }
.qbtn { width: 22px; display: flex; justify-content: center; }
.qbtn svg { width: 18px; height: 18px; }
.drop { width: 10px; display: flex; justify-content: center; }
.more { border-top: 1px solid #4c5158; margin-left: 6px; width: 7px; padding-top: 2px; }
.titlebar h1 { flex: 1; margin: 0; padding-right: 48px; text-align: center; white-space: pre; font: 11px/16px "Open Sans", "Noto Sans", sans-serif; }
.syskeys { display: flex; gap: 2px; padding-right: 2px; }
.syskeys button { width: 43px; height: 24px; display: flex; align-items: center; justify-content: center; }
.syskeys svg { width: 12px; height: 12px; fill: none; stroke: #111; }

.tabs { display: flex; align-items: flex-end; gap: 1px; height: 25px; padding-left: 63px; color: #fff; border-top: 1px solid #888; }
.tab { height: 23px; padding: 0 13px; border-radius: 3px 3px 0 0; white-space: nowrap; }
.tab:first-child { padding-right: 17px; }
.tab.active { color: #000; background: linear-gradient(#f3f5f7, #cdd0d6); }
.tabtools { display: flex; align-items: center; gap: 5px; margin-left: auto; height: 24px; padding: 0 2px 4px 0; }
.tabtools button { display: flex; align-items: center; gap: 7px; }
.chev { width: 8px; height: 8px; fill: none; stroke: #ddd; }
.help { padding-left: 5px; color: #4560a8; font: bold 17px/18px "Liberation Sans", sans-serif; }
.mdi { width: 14px; justify-content: center; }
.mdi svg { width: 10px; height: 10px; fill: none; stroke: #9aa3b2; }

.ribbon { display: flex; gap: 3px; height: 87px; padding: 3px 4px 2px; margin-bottom: 2px; border-radius: 4px; background: linear-gradient(#d6d9de, #c3c8d1 18%, #b3bac6 28%, #c7cfd6 70%, #e2efef); overflow: hidden; border-bottom: 1px solid #8b8f94; }
.group { display: flex; flex-direction: column; flex: none; border: 1px solid #a3a8b0; border-radius: 3px; background: linear-gradient(#d5d8de, #c3c8d1 18%, #b3b9c6 22%, #d3dade 70%, #e0e6e8); overflow: hidden; }
.w65 { width: 65px; } .w68 { width: 68px; } .w80 { width: 80px; } .w98 { width: 98px; } .w116 { width: 116px; } .w130 { width: 130px; }
.w134 { width: 134px; } .w168 { width: 168px; } .w188 { width: 188px; } .w255 { width: 255px; }
.group h2 { flex: none; height: 14px; margin: 0; text-align: center; white-space: nowrap; font: 11px/13px "Noto Sans", sans-serif; color: #fff; background: linear-gradient(#a9acae, #8f9294); }
.body { flex: 1; display: flex; align-items: flex-start; padding: 1px 3px 0; }
.big { display: flex; flex-direction: column; align-items: center; justify-content: flex-start; flex: none; height: 64px; border: 1px solid transparent; border-radius: 2px; }
.b40 { width: 40px; } .b44 { width: 44px; } .b50 { width: 50px; } .b58 { width: 58px; } .b60 { width: 60px; }
.pic { flex: none; width: 100%; height: 35px; display: flex; justify-content: center; }
.pic svg { width: 32px; height: 32px; margin-top: 2px; }
.cap { flex: 1; white-space: pre; text-align: center; line-height: 13px; }
.cap .tri { margin-left: 3px; vertical-align: 2px; }
.off .cap, .off .words { color: #85898e; }
.off svg, .off .glyph { opacity: .5; }
.on { background: linear-gradient(#fbd9a5, #fdbb62 50%, #ffe08a); border-color: #a5875a; }
.big.on .pic { background: linear-gradient(#fad29c, #fcb461 50%, #fd9a2c 55%, #fdb95a); border-bottom: 1px solid #a5875a; }
.big.on .cap { width: 100%; background: linear-gradient(#fdd27a, #fff08c); }
.big.on.off .cap { background: linear-gradient(#f5cd86, #fbe98f); }
.vsep { width: 1px; height: 54px; margin: 5px 2px 0; background: #a2a8b1; box-shadow: 1px 0 #e9edf0; }
.col { display: flex; flex-direction: column; width: 24px; flex: none; }
.col.slim { width: 10px; }
.col.wide { width: 88px; padding-left: 4px; }
.cell { display: flex; align-items: center; justify-content: center; height: 21px; border: 1px solid transparent; border-radius: 2px; }
.cell.on { border-color: #a5875a; }
.wide .cell { justify-content: flex-start; gap: 4px; }
.cell svg { width: 19px; height: 19px; }
.glyph { font: bold 14px/16px "Liberation Serif", serif; white-space: nowrap; }
.glyph sub { font-size: 8px; line-height: 8px; vertical-align: -3px; color: #333; }
.wine .glyph { font-size: 12px; }
.glyph .pre { font-size: 10px; font-weight: normal; color: #333; }
.navy .glyph { color: #2e3a80; } .wine .glyph { color: #a01458; } .rust .glyph { color: #a0303a; font-style: italic; }
.green .glyph { color: #2c7a44; } .blue .glyph { color: #1d84c0; }
.dim .glyph { width: 14px; color: #555; font: italic bold 14px/16px "Liberation Sans", sans-serif; }

.canvas { flex: 1; display: flex; flex-direction: column; background: #fff; border: 1px solid #7b7b7b; border-bottom: 2px solid #dcdcdc; margin-top: 1px; font: 14px/16px "Lato", "Noto Sans", sans-serif; }
.notes { padding: 5px 4px 0; font-family: "Noto Sans", sans-serif; }
.notes p { margin: 0; }
.model { display: flex; align-items: flex-start; margin-top: 76px; }
.legend { flex: none; width: 98px; margin: 0; padding: 0 0 0 10px; list-style: none; }
.legend li { display: flex; height: 72px; gap: 8px; }
.legend li.last { height: 16px; padding-left: 35px; }
.swatch { width: 27px; height: 73px; border: 1px solid #000; }
.val { line-height: 6px; }
.plan { flex: 1; min-width: 0; font-size: 14px; }
.origin { display: flex; align-items: flex-end; padding: 19px 0 0 30px; }
.origin svg { width: 40px; height: 56px; font: bold 16px "Noto Sans", sans-serif; }
.origin span { line-height: 14px; }

.tools { display: flex; height: 27px; border-top: 2px solid #8e9096; border-bottom: 1px solid #3b3b3b; }
.strip { display: flex; align-items: center; background: linear-gradient(#d3d5da, #a9adb6); }
.t1 { width: 680px; } .t2 { width: 246px; } .t3 { width: 217px; }
.grip { width: 8px; height: 14px; margin-left: 2px; flex: none; border-left: 2px dotted #333; }
.tbtn { flex: 22 1 0; display: flex; align-items: center; justify-content: center; height: 21px; }
.tbtn svg { width: 18px; height: 18px; }
.tdrop { flex: 11 1 0; height: 21px; display: flex; align-items: center; justify-content: center; }
.tsep { flex: 6 1 0; height: 14px; border-left: 1px solid #666; }
.overflow { width: 9px; height: 100%; margin-left: 4px; display: flex; align-items: flex-end; justify-content: center; padding-bottom: 3px; background: linear-gradient(#a4a7ae, #6a6d74); }
.overflow .tri { border-top-color: #fff; }

.status { position: relative; display: flex; height: 23px; padding-left: 367px; background: linear-gradient(#444858, #33353a 25%, #2e2e2e 30%); }
.controls { display: flex; align-items: center; padding: 0 5px 0 6px; background: linear-gradient(#c3c5c7, #84888e); border-left: 1px solid #999; }
.btns { display: flex; background: #c2c8cc; }
.sbtn { width: 23px; height: 20px; display: flex; align-items: center; justify-content: center; }
.sbtn svg { width: 18px; height: 18px; }
.pick { position: relative; height: 19px; margin: 0 1px; }
.pick select { appearance: none; width: 100%; height: 19px; padding: 0 2px; border: 1px solid #fff; border-radius: 0; background: #e6e6e6; color: #000; font: inherit; }
.pick .tri { position: absolute; right: 4px; top: 8px; }
.s54 { width: 54px; } .s112 { width: 112px; } .s132 { width: 132px; }
.ssep { width: 2px; height: 20px; margin: 0 1px; background: #333; }
.sgap { width: 5px; }
.counter { flex: 4; padding-left: 3px; line-height: 24px; border-left: 2px solid #333; background: linear-gradient(#c3c5c7, #84888e); }
.counter:nth-of-type(3) { flex: 3; }
.resize { position: absolute; right: 0; bottom: 0; width: 12px; height: 12px; }
</style>
